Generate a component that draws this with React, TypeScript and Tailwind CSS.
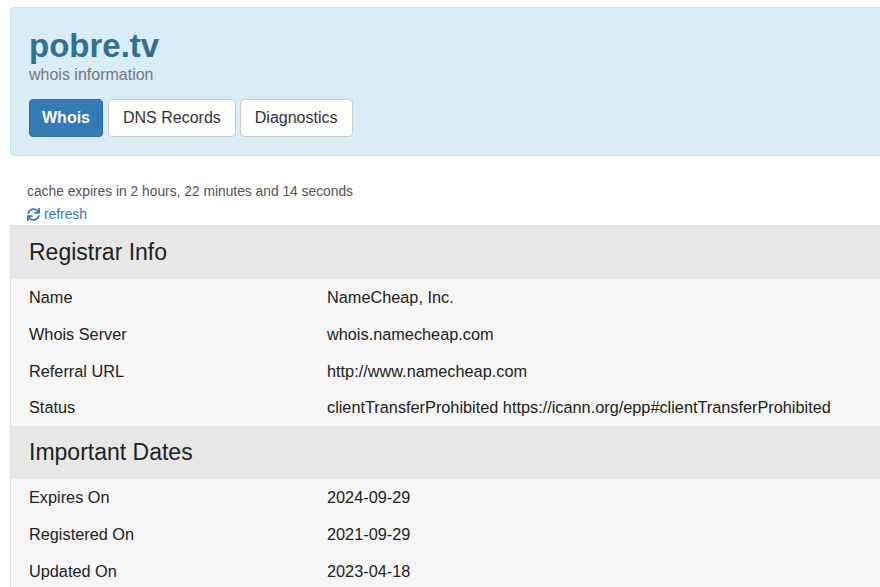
import React from 'react';
import { FaSync } from 'react-icons/fa';

type Row = { label: string; value: string };

const sections: { title: string; rows: Row[] }[] = [
  {
    title: 'Registrar Info',
    rows: [
      { label: 'Name', value: 'NameCheap, Inc.' },
      { label: 'Whois Server', value: 'whois.namecheap.com' },
      { label: 'Referral URL', value: 'http://www.namecheap.com' },
      { label: 'Status', value: 'clientTransferProhibited https://icann.org/epp#clientTransferProhibited' },
    ],
  },
  {
    title: 'Important Dates',
    rows: [
      { label: 'Expires On', value: '2024-09-29' },
      { label: 'Registered On', value: '2021-09-29' },
      { label: 'Updated On', value: '2023-04-18' },
    ],
  },
];

const tabs = ['Whois', 'DNS Records', 'Diagnostics'];

const App: React.FC = () => {
  return (
    <div className="min-h-screen w-full overflow-hidden bg-white font-['Liberation_Sans',Arial,sans-serif] text-[#333]">
      <div className="w-[1100px] pl-[10px] pt-[7px]">
        {/* header panel */}
        <div className="rounded-[4px] border border-[#bce8f1] bg-[#d9edf7] px-[18px] pt-[20px] pb-[18px]">
          <h1 className="text-[33px] leading-[36px] font-bold text-[#31708f]">pobre.tv</h1>
          <div className="mt-[1px] text-[16px] leading-[20px] text-[#777]">whois information</div>
          <div className="mt-[14px] flex gap-[4px]">
            {tabs.map((t, i) => (
              <button
                key={t}
                className={
                  i === 0
                    ? 'mr-[1px] h-[38px] rounded-[4px] border border-[#2e6da4] bg-[#337ab7] px-[12px] text-[16px] font-bold text-white'
                    : 'h-[38px] rounded-[4px] border border-[#ccc] bg-white px-[14px] text-[16px] text-[#333]'
                }
              >
                {t}
              </button>
            ))}
          </div>
        </div>

        <div className="mt-[24px] pl-[17px] text-[13.8px] leading-[23px]">
          <div className="text-[#555]">cache expires in 2 hours, 22 minutes and 14 seconds</div>
          <a className="flex items-center gap-[4px] text-[#337ab7]" href="#">
            <FaSync size={13} />
            refresh
          </a>
        </div>

        {/* whois table */}
        <div className="-mt-[1px] border-t border-l border-[#e0e0e0]">
          {sections.map((s) => (
            <div key={s.title}>
              <div className="flex h-[53px] items-center bg-[#e7e7e7] pl-[18px] text-[23px] text-[#222]">
                {s.title}
              </div>
              {s.rows.map((r) => (
                <div key={r.label} className="flex h-[36.75px] items-center bg-[#f6f6f6] text-[16.3px] text-[#222]">
                  <div className="w-[316px] shrink-0 pl-[18px]">{r.label}</div>
                  <div>{r.value}</div>
                </div>
              ))}
            </div>
          ))}
        </div>
      </div>
    </div>
  );
};

export default App;
